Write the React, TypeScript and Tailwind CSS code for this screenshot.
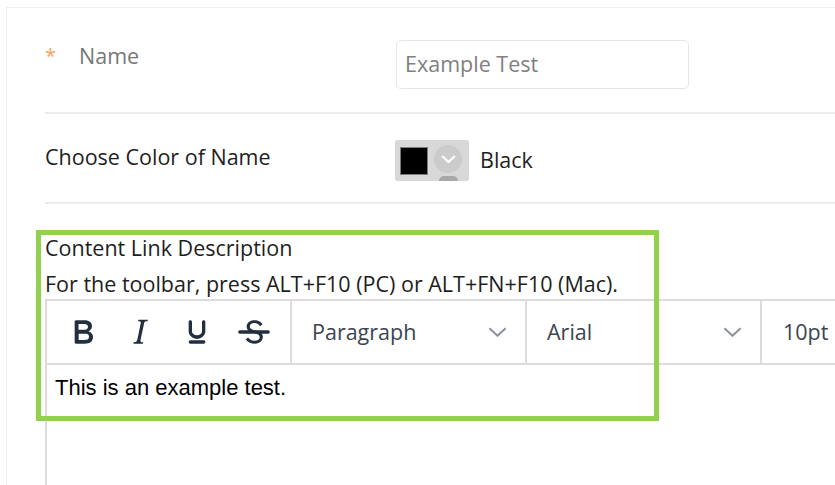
import React from 'react';

const ui = { fontFamily: '"Open Sans", "Noto Sans", sans-serif' };
const arial = { fontFamily: '"Liberation Sans", Arial, sans-serif' };

const Chevron = ({ className, width = 2 }: { className?: string; width?: number }) => (
  <svg viewBox="0 0 20 10" className={className} fill="none" stroke="currentColor" strokeWidth={width}>
    <path d="M1.5 1 10 9l8.5-8" />
  </svg>
);

const BoldIcon = () => (
  <svg width="40" height="40" viewBox="0 0 24 24" fill="#222f3e">
    <path d="M7.8 19c-.3 0-.5 0-.6-.2l-.2-.5V5.7c0-.2 0-.4.2-.5l.6-.2h5c1.5 0 2.7.3 3.5 1 .7.6 1.1 1.4 1.1 2.5a3 3 0 0 1-.6 1.9c-.4.6-1 1-1.6 1.2.4.1.9.3 1.3.6s.8.7 1 1.2c.4.4.5 1 .5 1.6 0 1.3-.4 2.3-1.3 3-.8.7-2.1 1-3.8 1H7.8zm5-8.3c.6 0 1.2-.1 1.6-.5.4-.3.6-.7.6-1.3 0-1.1-.8-1.7-2.3-1.7H9.3v3.5h3.4zm.5 6c.7 0 1.3-.1 1.7-.4.4-.4.6-.9.6-1.5s-.2-1-.7-1.4c-.4-.3-1-.4-2-.4H9.4v3.8h4z" />
  </svg>
);

const ItalicIcon = () => (
  <svg width="40" height="40" viewBox="0 0 24 24" fill="#222f3e">
    <path d="m16.7 4.7-.1.9h-.3c-.6 0-1 0-1.4.3-.3.3-.4.6-.5 1.1l-2.1 9.8v.6c0 .5.4.8 1.4.8h.2l-.2.8H8l.2-.8h.2c1.1 0 1.8-.5 2-1.5l2-9.8.1-.5c0-.6-.4-.8-1.4-.8h-.3l.2-.9h5.8z" />
  </svg>
);

const UnderlineIcon = () => (
  <svg width="40" height="40" viewBox="0 0 24 24" fill="#222f3e">
    <path d="M16 5c.6 0 1 .4 1 1v5.5a4 4 0 0 1-.4 1.8l-1 1.4a5.3 5.3 0 0 1-5.5 1 5 5 0 0 1-1.6-1c-.5-.4-.8-.9-1.1-1.4a4 4 0 0 1-.4-1.8V6c0-.6.4-1 1-1s1 .4 1 1v5.5c0 .3 0 .6.2 1l.6.7a3.3 3.3 0 0 0 2.2.8 3.4 3.4 0 0 0 2.2-.8c.3-.2.4-.5.6-.8l.2-.9V6c0-.6.4-1 1-1zM8 17h8c.6 0 1 .4 1 1s-.4 1-1 1H8a1 1 0 0 1 0-2z" fillRule="evenodd" />
  </svg>
);

const StrikeIcon = () => (
  <svg width="40" height="40" viewBox="0 0 24 24" fill="#222f3e">
    <g fillRule="evenodd">
      <path d="M15.6 8.5c-.5-.7-1-1.1-1.3-1.3-.6-.4-1.3-.6-2-.6-2.7 0-2.8 1.7-2.8 2.1 0 1.6 1.8 2 3.2 2.3 4.4.9 4.6 2.8 4.6 3.9 0 1.4-.7 4.1-5 4.1A6.2 6.2 0 0 1 7 16.4l1.5-1.1c.4.6 1.6 2 3.7 2 1.6 0 2.5-.4 3-1.2.4-.8.3-2-.8-2.6-.7-.4-1.6-.7-2.9-1-1-.2-3.9-.8-3.9-3.6C7.6 6 10.3 5 12.4 5c2.9 0 4.2 1.6 4.7 2.4l-1.5 1.1z" />
      <path d="M3.5 11h17a1 1 0 0 1 0 2h-17a1 1 0 0 1 0-2z" fillRule="nonzero" />
    </g>
  </svg>
);

const Dropdown = ({ label }: { label: string }) => (
  <div className="w-[235px] flex items-center justify-between border-r-2 border-[#dcdcdc] pl-[20px] pr-[18px]">
    <span className="text-[21.5px] text-[#3a4550]" style={ui}>{label}</span>
    <Chevron className="w-[19px] h-[10px] text-[#8a9098]" />
  </div>
);

export default function App() {
  return (
    <div className="w-[835px] h-[485px] overflow-hidden bg-white relative">
      <div className="ml-[6px] mt-[7px] w-[1000px] border-l border-t border-[#f0f0f0] pl-[38px]">
        {/* name row */}
        <div className="flex items-start border-b-2 border-[#ececec] pt-[32px] pb-[23px]">
          <div className="w-[351px] flex items-center" style={ui}>
            <span className="text-[#f7a35c] text-[20px] w-[34px]">*</span>
            <span className="text-[21.5px] text-[#777]">Name</span>
          </div>
          <div className="w-[293px] h-[49px] rounded-[5px] border border-[#e6e6e6] flex items-center pl-[8px]">
            <span className="text-[21.5px] text-[#808080]" style={ui}>Example Test</span>
          </div>
        </div>

        {/* color row */}
        <div className="flex items-center border-b-2 border-[#ececec] pt-[26px] pb-[21px]">
          <div className="w-[350px] text-[21.5px] text-[#1e1e1e] -mt-[7px]" style={ui}>Choose Color of Name</div>
          <div className="w-[74px] h-[41px] bg-[#d8d8d8] rounded-[2px] flex items-start pl-[5px] pt-[7px] relative">
            <div className="w-[28px] h-[28px] bg-black border border-[#7a7a7a]" />
            <div className="ml-[6px] -mt-[2px] w-[28px] h-[28px] rounded-full bg-[#cbcbcb] flex items-center justify-center">
              <Chevron className="w-[15px] h-[8px] text-white" width={3} />
            </div>
            <div className="absolute left-[44px] top-[36px] w-[19px] h-[5px] rounded-t-full bg-[#a8a8a8]" />
          </div>
          <span className="ml-[11px] text-[21.5px] text-[#1e1e1e]" style={ui}>Black</span>
        </div>

        {/* rich text field */}
        <div className="pt-[30px]" style={ui}>
          <div className="text-[21.5px] text-[#1e1e1e] leading-[28px]">Content Link Description</div>
          <div className="text-[21.5px] text-[#1e1e1e] leading-[28px] mt-[8px]">
            For the toolbar, press ALT+F10 (PC) or ALT+FN+F10 (Mac).
          </div>
          <div className="mt-[1px] border-l-2 border-[#dcdcdc] h-[300px]">
            <div className="flex h-[66px] border-t-2 border-b-2 border-[#dcdcdc]">
              <div className="w-[245px] flex items-center border-r-2 border-[#dcdcdc] pl-[16px] gap-[17px]">
                <BoldIcon />
                <ItalicIcon />
                <UnderlineIcon />
                <StrikeIcon />
              </div>
              <Dropdown label="Paragraph" />
              <Dropdown label="Arial" />
              <div className="flex items-center pl-[21px]">
                <span className="text-[21.5px] text-[#3a4550]" style={ui}>10pt</span>
              </div>
            </div>
            <div className="pl-[8px] pt-[6px] text-[22px] text-black" style={arial}>This is an example test.</div>
          </div>
        </div>
      </div>

      {/* highlight frame */}
      <div className="absolute left-[36px] top-[230px] w-[623px] h-[191px] border-[5px] border-[#92d050] pointer-events-none" />
    </div>
  );
}
